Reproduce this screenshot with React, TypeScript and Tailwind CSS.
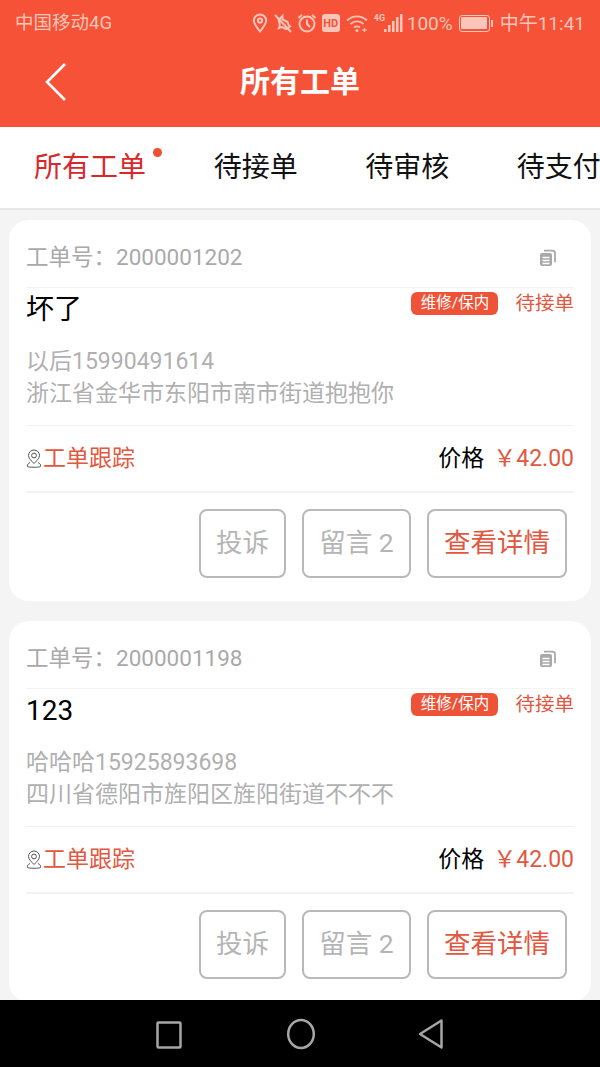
import React from "react";

const font = { fontFamily: 'Roboto, "Noto Sans CJK SC", sans-serif' };

function StatusIcons() {
  return (
    <div className="flex items-center text-[#fbc5b9]">
      <svg width="16" height="20" viewBox="0 0 16 20" fill="none" stroke="currentColor" strokeWidth="2" className="ml-0">
        <path d="M8 18.5C4.5 14 1.8 11 1.8 7.6a6.2 6.2 0 0 1 12.4 0C14.2 11 11.5 14 8 18.5Z" />
        <circle cx="8" cy="7.6" r="2.1" />
      </svg>
      <svg width="20" height="20" viewBox="0 0 20 20" fill="none" stroke="currentColor" strokeWidth="2" className="ml-[5px]">
        <path d="M5 7.5 9.5 3v3.5l5 2.5c.5 2 1 3.5 2.5 4.5l-4 2.5-4-2-3 1c1-2 1-4.500-.5-8Z" />
        <path d="M2 2l16 17" />
      </svg>
      <svg width="20" height="20" viewBox="0 0 20 20" fill="none" stroke="currentColor" strokeWidth="2" className="ml-[4px]">
        <circle cx="10" cy="11" r="7.500" />
        <path d="M10 6.500V11l3 3M1.500 5 5 1.800M18.500 5 15 1.800" />
      </svg>
      <div className="ml-[5px] flex h-[18px] w-[18px] items-center justify-center rounded-[3px] bg-[#fbc5b9] text-[11px] leading-none font-bold text-[#f55237]">
        HD
      </div>
      <svg width="23" height="20" viewBox="0 0 23 20" fill="none" stroke="currentColor" strokeWidth="1.800" className="ml-[6px]">
        <path d="M1 7.500C7 2 15 2 21 7.500M4.500 11c4-3.500 9-3.500 13 0M8 14.500c2-1.500 4-1.500 6 0" />
        <circle cx="11" cy="17.500" r="1.500" fill="currentColor" stroke="none" />
        <path d="M16 17h5M18.500 15v4" strokeWidth="1.200" />
      </svg>
      <div className="relative ml-[5px] h-[20px] w-[29px]">
        <span className="absolute top-[-1px] left-0 text-[9px] leading-[12px] font-bold">4G</span>
        <svg width="29" height="20" viewBox="0 0 29 20" fill="currentColor" className="absolute top-0 left-0">
          <rect x="10" y="16" width="2.500" height="3" />
          <rect x="14" y="12" width="2.500" height="7" />
          <rect x="18" y="8" width="2.500" height="11" />
          <rect x="22" y="4" width="2.500" height="15" />
          <rect x="26" y="1" width="2.500" height="18" />
        </svg>
      </div>
      <span className="ml-[4px] text-[19px] leading-none">100%</span>
      <div className="ml-[6px] flex items-center">
        <div className="h-[17px] w-[31px] rounded-[3px] border border-[#fbc5b9] p-[1.500px]">
          <div className="h-full w-full rounded-[1px] bg-[#fbc5b9]" />
        </div>
        <div className="ml-[1px] h-[7px] w-[2px] bg-[#fbc5b9]" />
      </div>
      <span className="ml-[7px] text-[19px] leading-none">中午11:41</span>
    </div>
  );
}

function Btn({ children, w, active }: { children: React.ReactNode; w: string; active?: boolean }) {
  return (
    <div
      className={`flex h-[69px] items-center justify-center rounded-[8px] border-2 border-[#b9b9b9] bg-white text-[26.500px] leading-none ${w} ${
        active ? "text-[#e2573f]" : "text-[#b5b5b5]"
      }`}
    >
      {children}
    </div>
  );
}

function Card({ no, title, contact, address }: { no: string; title: string; contact: string; address: string }) {
  return (
    <div className="shrink-0 rounded-[20px] bg-white px-[17px]">
      <div className="flex h-[68px] items-center justify-between border-b border-[#f3f3f3] pt-[17px] pb-[9px]">
        <span className="text-[22.500px] leading-none text-[#a9a9a9]">工单号：{no}</span>
        <svg width="18" height="18" viewBox="0 0 18 18" fill="none" stroke="#a9a9a9" className="mr-[17px]">
          <rect x="1" y="4" width="12" height="13" rx="2" fill="#a9a9a9" stroke="none" />
          <path d="M3.500 8.500h7M3.500 11.500h7M3.500 14.500h7" stroke="#fff" strokeWidth="1.500" />
          <path d="M5 1.700h8.500a2.500 2.500 0 0 1 2.500 2.500v9" strokeWidth="1.800" />
        </svg>
      </div>
      <div className="h-[138px] border-b border-[#f1f1f1]">
        <div className="flex h-[44px] items-start justify-between">
          <span className="pt-[5px] text-[28px] leading-[34px] text-black">{title}</span>
          <div className="flex items-center pt-[4px]">
            <span className="flex h-[23px] w-[87px] items-center justify-center rounded-[6px] bg-[#ee5237] text-[15.500px] leading-none text-white">
              维修/保内
            </span>
            <span className="ml-[17px] text-[19.500px] leading-none text-[#e2573f]">待接单</span>
          </div>
        </div>
        <div className="mt-[14px] text-[23px] leading-[32px] text-[#b0b0b0]">
          <div>{contact}</div>
          <div>{address}</div>
        </div>
      </div>
      <div className="flex h-[67px] items-center justify-between border-b-2 border-[#f3f3f3]">
        <div className="flex items-center">
          <svg width="16" height="20" viewBox="0 0 16 20" fill="none" stroke="#555" strokeWidth="1" className="mr-[1px]">
            <path d="M8 14.500C5 11.500 2.500 9 2.500 6.500a5.500 5.500 0 0 1 11 0C13.500 9 11 11.500 8 14.500Z" />
            <circle cx="8" cy="6.500" r="2.400" />
            <path d="M4 13.500C2 14.500 1 15.500 1.500 17.500c.3 1 13 1 13 0 .500-2-.5-3-2.500-4" />
          </svg>
          <span className="text-[23px] leading-none text-[#e2573f]">工单跟踪</span>
        </div>
        <div className="flex items-center text-[23px] leading-none">
          <span className="text-black">价格</span>
          <span className="ml-[9px] text-[#e2573f]">￥42.00</span>
        </div>
      </div>
      <div className="flex justify-end pt-[16px] pr-[7px] pb-[23px]">
        <Btn w="w-[87px]">投诉</Btn>
        <Btn w="ml-[16px] w-[109px]">留言 2</Btn>
        <Btn w="ml-[16px] w-[140px]" active>
          查看详情
        </Btn>
      </div>
    </div>
  );
}

export default function App() {
  return (
    <div className="flex h-[1067px] w-[600px] flex-col overflow-hidden bg-[#f4f4f4]" style={font}>
      <div className="h-[127px] shrink-0 bg-[#f55237]">
        <div className="flex h-[44px] items-center justify-between pt-[2px] pr-[15px] pl-[15px]">
          <span className="text-[18.500px] leading-none text-[#fbc5b9]">中国移动4G</span>
          <StatusIcons />
        </div>
        <div className="relative flex h-[80px] items-center justify-center pb-[4px]">
          <svg width="22" height="40" viewBox="0 0 22 40" fill="none" stroke="#fff" strokeWidth="2.600" className="absolute top-[18px] left-[45px]">
            <path d="M20 2 2 20l18 18" />
          </svg>
          <span className="text-[30px] leading-none font-bold text-white">所有工单</span>
        </div>
      </div>

      <div className="flex h-[83px] shrink-0 overflow-hidden border-b-2 border-[#e6e6e6] bg-white">
        <div className="relative -mb-[2px] flex h-[83px] w-[180px] shrink-0 items-center justify-center border-b-2 border-[#dc2a27] text-[28px] leading-none text-[#d9282a]">
          所有工单
          <span className="absolute top-[21px] left-[153px] h-[9px] w-[9px] rounded-full bg-[#ef5030]" />
        </div>
        {["待接单", "待审核", "待支付"].map((t) => (
          <div key={t} className="flex w-[151.500px] shrink-0 items-center justify-center text-[28px] leading-none text-[#111]">
            {t}
          </div>
        ))}
      </div>

      <div className="flex min-h-0 flex-1 flex-col gap-[20px] overflow-hidden px-[9px] pt-[10px]">
        <Card no="2000001202" title="坏了" contact="以后15990491614" address="浙江省金华市东阳市南市街道抱抱你" />
        <Card no="2000001198" title="123" contact="哈哈哈15925893698" address="四川省德阳市旌阳区旌阳街道不不不" />
      </div>

      <div className="flex h-[67px] shrink-0 items-center bg-black">
        <div className="flex w-full items-center justify-center text-[#a6a6a6]">
          <svg width="26" height="30" viewBox="0 0 26 30" fill="none" stroke="currentColor" strokeWidth="2.500">
            <rect x="1.500" y="3.500" width="23" height="25" rx="1" />
          </svg>
          <svg width="30" height="32" viewBox="0 0 30 32" fill="none" stroke="currentColor" strokeWidth="2.500" className="ml-[104px]">
            <ellipse cx="15" cy="16" rx="12.800" ry="14" />
          </svg>
          <svg width="26" height="32" viewBox="0 0 26 32" fill="none" stroke="currentColor" strokeWidth="2.500" strokeLinejoin="round" className="ml-[102px]">
            <path d="M23.500 2.500v27L2 16Z" />
          </svg>
        </div>
      </div>
    </div>
  );
}
